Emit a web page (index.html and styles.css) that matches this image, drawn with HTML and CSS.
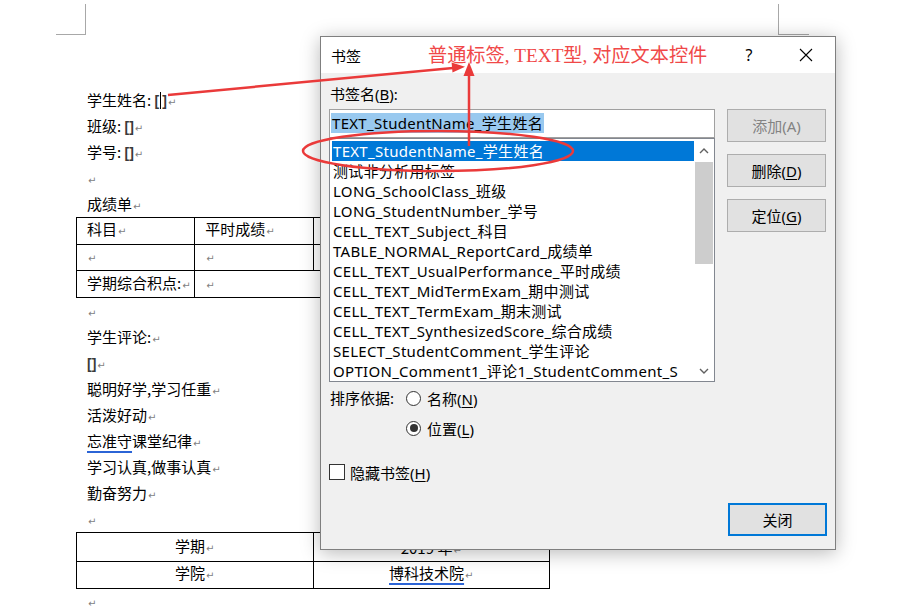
FILE: index.html
```html
<!DOCTYPE html>
<html lang="zh-CN">
<head>
<meta charset="utf-8">
<title>书签</title>
<link rel="stylesheet" href="styles.css">
</head>
<body>
<div class="page">
  <span class="crop crop-tl"></span>
  <span class="crop crop-tr"></span>
  <p>学生姓名: <span class="bm">[<i class="caret"></i>]</span><span class="pm">↵</span></p>
  <p>班级: <span class="bm">[]</span><span class="pm">↵</span></p>
  <p>学号: <span class="bm">[]</span><span class="pm">↵</span></p>
  <p><span class="pm">↵</span></p>
  <p>成绩单<span class="pm">↵</span></p>
  <table class="grid">
    <tr><td>科目<span class="pm">↵</span></td><td>平时成绩<span class="pm">↵</span></td><td></td><td></td></tr>
    <tr><td><span class="pm">↵</span></td><td><span class="pm">↵</span></td><td></td><td></td></tr>
    <tr><td>学期综合积点:<span class="pm">↵</span></td><td colspan="3"><span class="pm">↵</span></td></tr>
  </table>
  <p><span class="pm">↵</span></p>
  <p>学生评论:<span class="pm">↵</span></p>
  <p><span class="bm">[]</span><span class="pm">↵</span></p>
  <p>聪明好学,学习任重<span class="pm">↵</span></p>
  <p>活泼好动<span class="pm">↵</span></p>
  <p><span class="squiggle">忘准守</span>课堂纪律<span class="pm">↵</span></p>
  <p>学习认真,做事认真<span class="pm">↵</span></p>
  <p>勤奋努力<span class="pm">↵</span></p>
  <p><span class="pm">↵</span></p>
  <table class="grid center">
    <tr><td>学期<span class="pm">↵</span></td><td class="low">2019 年<span class="pm">↵</span></td></tr>
    <tr><td>学院<span class="pm">↵</span></td><td><span class="squiggle">博科技术院</span><span class="pm">↵</span></td></tr>
  </table>
  <p class="last"><span class="pm">↵</span></p>
</div>

<div class="dlg">
  <div class="titlebar">
    <span class="title">书签</span>
    <span class="tb-btn">?</span>
    <span class="tb-btn tb-close">
      <svg width="14" height="14" viewBox="0 0 14 14"><path d="M1 1 L13 13 M13 1 L1 13" stroke="#000" stroke-width="1.1" fill="none"/></svg>
    </span>
  </div>
  <div class="dlg-body">
    <div class="main">
      <div class="left">
        <div class="lbl">书签名(<u>B</u>):</div>
        <div class="input"><span class="selected">TEXT_StudentName_学生姓名</span></div>
        <div class="list">
          <div class="items">
            <div class="item sel">TEXT_StudentName_学生姓名</div>
            <div class="item">测试非分析用标签</div>
            <div class="item">LONG_SchoolClass_班级</div>
            <div class="item">LONG_StudentNumber_学号</div>
            <div class="item">CELL_TEXT_Subject_科目</div>
            <div class="item">TABLE_NORMAL_ReportCard_成绩单</div>
            <div class="item">CELL_TEXT_UsualPerformance_平时成绩</div>
            <div class="item">CELL_TEXT_MidTermExam_期中测试</div>
            <div class="item">CELL_TEXT_TermExam_期末测试</div>
            <div class="item">CELL_TEXT_SynthesizedScore_综合成绩</div>
            <div class="item">SELECT_StudentComment_学生评论</div>
            <div class="item">OPTION_Comment1_评论1_StudentComment_S</div>
          </div>
          <div class="sb">
            <div class="sb-arr sb-up"><svg width="10" height="6" viewBox="0 0 10 6"><path d="M1 5 L5 1 L9 5" stroke="#606060" stroke-width="1.4" fill="none"/></svg></div>
            <div class="sb-thumb"></div>
            <div class="sb-track"></div>
            <div class="sb-arr"><svg width="10" height="6" viewBox="0 0 10 6"><path d="M1 1 L5 5 L9 1" stroke="#606060" stroke-width="1.4" fill="none"/></svg></div>
          </div>
        </div>
      </div>
      <div class="right">
        <div class="btn disabled">添加(A)</div>
        <div class="btn">删除(<u>D</u>)</div>
        <div class="btn">定位(<u>G</u>)</div>
      </div>
    </div>
    <div class="sort">
      <div class="sort-lbl">排序依据:</div>
      <div class="radio"><span class="circle"></span><span>名称(<u>N</u>)</span></div>
      <div></div>
      <div class="radio"><span class="circle on"></span><span>位置(<u>L</u>)</span></div>
    </div>
    <div class="check"><span class="box"></span><span>隐藏书签(<u>H</u>)</span></div>
    <div class="footer"><div class="btn default">关闭</div></div>
  </div>
</div>

<div class="note">普通标签, TEXT型, 对应文本控件</div>
<svg class="anno" width="897" height="611" viewBox="0 0 897 611">
  <line x1="168" y1="95" x2="453" y2="68" stroke="#ea3a3a" stroke-width="2.5"/>
  <polygon points="465,66.8 451.6,62.4 452.5,72.4" fill="#ea3a3a"/>
  <line x1="469" y1="146" x2="469" y2="74" stroke="#ea3a3a" stroke-width="2.5"/>
  <polygon points="469,62 463.5,76 474.5,76" fill="#ea3a3a"/>
  <ellipse cx="438" cy="151" rx="135" ry="20" fill="none" stroke="#ea3a3a" stroke-width="2.5"/>
</svg>
</body>
</html>
```

FILE: styles.css
```css
* { box-sizing: border-box; }
html, body { margin: 0; padding: 0; background: #fff; }
body {
  width: 897px;
  height: 611px;
  overflow: hidden;
  position: relative;
  font-family: "Noto Sans CJK SC", sans-serif;
}

/* ---------- document page ---------- */
.page {
  position: relative;
  padding: 87px 0 0 87px;
  font-size: 15px;
  line-height: 26px;
  color: #000;
}
.page p { margin: 0; height: 26px; white-space: nowrap; }
.page p.last { height: 24px; line-height: 24px; }
.crop {
  position: absolute;
  top: 4px;
  height: 31px;
  border: 0 solid #a8a8a8;
}
.crop-tl { left: 56px; width: 30px; border-right-width: 1px; border-bottom-width: 1px; }
.crop-tr { left: 778px; width: 31px; border-left-width: 1px; border-bottom-width: 1px; }

.pm {
  font-family: "DejaVu Sans", sans-serif;
  font-size: 10px;
  color: #7f7f7f;
  margin-left: 1px;
}
.bm {
  font-family: "Liberation Sans", sans-serif;
  font-weight: bold;
  font-size: 14px;
  color: #3a3a3a;
}
.caret {
  display: inline-block;
  width: 1px;
  height: 17px;
  background: #000;
  vertical-align: -3px;
  margin: 0 1px;
}
.squiggle {
  text-decoration: underline;
  text-decoration-color: #2b64d6;
  text-decoration-thickness: 2px;
  text-underline-offset: 4px;
}

.grid {
  border-collapse: collapse;
  table-layout: fixed;
  margin-left: -11px;
  width: 474px;
  font-size: 15px;
}
.grid tr { height: 26.7px; }
.grid td {
  border: 1px solid #000;
  padding: 0 0 0 10px;
  line-height: 22px;
  white-space: nowrap;
  overflow: hidden;
}
.grid.center td { text-align: center; padding: 0; }
.grid.center td.low { padding-top: 5px; line-height: 20px; }

/* ---------- dialog ---------- */
.dlg {
  position: absolute;
  left: 320px;
  top: 36px;
  width: 516px;
  height: 514px;
  border: 1px solid #7f7f7f;
  background: #f0f0f0;
  box-shadow: 0 3px 18px rgba(0, 0, 0, 0.28);
  font-family: "Noto Sans", "Noto Sans CJK SC", sans-serif;
  font-size: 15px;
  color: #000;
  z-index: 2;
}
.titlebar {
  height: 36px;
  background: #fff;
  display: flex;
  align-items: center;
  padding-left: 10px;
}
.title { flex: 1; font-family: "Noto Sans CJK SC", sans-serif; }
.tb-btn {
  width: 46px;
  height: 36px;
  display: flex;
  align-items: center;
  justify-content: center;
  font-size: 16px;
}
.tb-close { margin-left: 11px; margin-right: 6px; }

.dlg-body { padding: 11px 8px 0 8px; }
.main {
  display: grid;
  grid-template-columns: 386px 99px;
  column-gap: 12px;
}
.lbl { height: 20px; line-height: 20px; padding-left: 1px; }
u { text-underline-offset: 2px; }

.input {
  margin-top: 5px;
  height: 29px;
  border: 1px solid #a0a0a0;
  background: #fff;
  padding: 3px 0 0 1px;
}
.selected {
  display: inline-block;
  background: #99c9ef;
  line-height: 20px;
  padding: 0 1px;
  white-space: nowrap;
  letter-spacing: 0.3px;
}

.list {
  height: 244px;
  border: 1px solid #828790;
  background: #fff;
  display: flex;
}
.items { flex: 1; padding: 2px 0 0 2px; overflow: hidden; }
.item {
  height: 20px;
  line-height: 20px;
  padding-left: 1px;
  white-space: nowrap;
  overflow: hidden;
  letter-spacing: 0.3px;
}
.item.sel { background: #0078d7; color: #fff; }

.sb { width: 20px; display: flex; flex-direction: column; background: #fff; }
.sb-arr { height: 20px; display: flex; align-items: center; justify-content: center; }
.sb-up { height: 23px; }
.sb-thumb { height: 102px; background: #cdcdcd; margin: 0 1px; }
.sb-track { flex: 1; }

.right { display: flex; flex-direction: column; gap: 12px; padding-top: 25px; }
.btn {
  width: 99px;
  height: 33px;
  background: #e1e1e1;
  border: 1px solid #adadad;
  display: flex;
  align-items: center;
  justify-content: center;
}
.btn.disabled { color: #838383; }
.btn.default { border: 2px solid #0078d7; }

.sort {
  display: grid;
  grid-template-columns: 77px auto;
  row-gap: 10px;
  margin-top: 6px;
}
.sort-lbl { height: 20px; line-height: 20px; padding-left: 1px; }
.radio { display: flex; align-items: center; gap: 6px; height: 20px; }
.circle {
  width: 15px;
  height: 15px;
  border: 1px solid #333;
  border-radius: 50%;
  background: #fff;
  display: flex;
  align-items: center;
  justify-content: center;
}
.circle.on::after {
  content: "";
  width: 8px;
  height: 8px;
  border-radius: 50%;
  background: #333;
}
.check {
  display: flex;
  align-items: center;
  gap: 5px;
  height: 20px;
  margin-top: 24px;
}
.box { width: 16px; height: 16px; border: 1px solid #333; background: #fff; }
.footer { display: flex; justify-content: flex-end; margin-top: 21px; }

/* ---------- annotation overlay ---------- */
.note {
  position: absolute;
  left: 428px;
  top: 43px;
  font-family: "Liberation Serif", "Noto Sans CJK SC", serif;
  font-size: 19.2px;
  line-height: 26px;
  color: #f04848;
  white-space: nowrap;
  z-index: 3;
}
.anno { position: absolute; left: 0; top: 0; z-index: 4; pointer-events: none; }
```
